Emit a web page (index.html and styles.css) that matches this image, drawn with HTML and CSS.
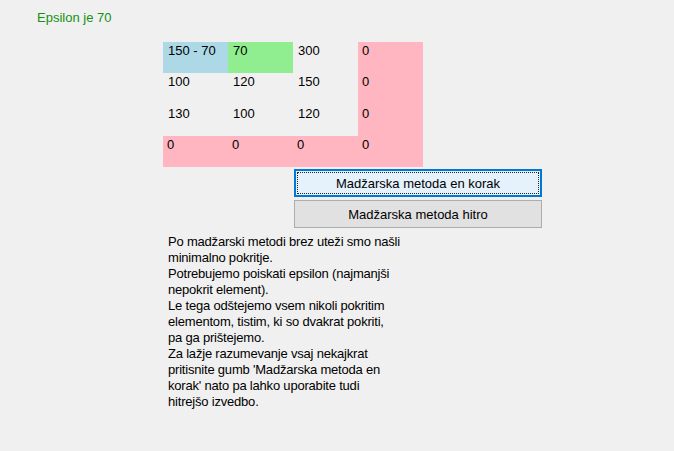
FILE: index.html
```html
<!DOCTYPE html>
<html lang="sl">
<head>
<meta charset="utf-8">
<title>Madžarska metoda</title>
<link rel="stylesheet" href="styles.css">
</head>
<body>
<div class="form">
  <div class="epsilon">Epsilon je 70</div>
  <div class="matrix">
    <div class="cell blue">150 - 70</div>
    <div class="cell green">70</div>
    <div class="cell">300</div>
    <div class="cell pink">0</div>
    <div class="cell">100</div>
    <div class="cell">120</div>
    <div class="cell">150</div>
    <div class="cell pink">0</div>
    <div class="cell">130</div>
    <div class="cell">100</div>
    <div class="cell">120</div>
    <div class="cell pink">0</div>
    <div class="cell pink">0</div>
    <div class="cell pink">0</div>
    <div class="cell pink">0</div>
    <div class="cell pink">0</div>
  </div>
  <div class="buttons">
    <button class="btn focused"><span class="focus">Madžarska metoda en korak</span></button>
    <button class="btn">Madžarska metoda hitro</button>
  </div>
  <p class="info">Po madžarski metodi brez uteži smo našli<br>minimalno pokritje.<br>Potrebujemo poiskati epsilon (najmanjši<br>nepokrit element).<br>Le tega odštejemo vsem nikoli pokritim<br>elementom, tistim, ki so dvakrat pokriti,<br>pa ga prištejemo.<br>Za lažje razumevanje vsaj nekajkrat<br>pritisnite gumb 'Madžarska metoda en<br>korak' nato pa lahko uporabite tudi<br>hitrejšo izvedbo.</p>
</div>
</body>
</html>
```

FILE: styles.css
```css
html, body {
  margin: 0;
  padding: 0;
  background: #f0f0f0;
}

body {
  width: 674px;
  height: 451px;
  overflow: hidden;
  font-family: "Liberation Sans", Arial, sans-serif;
  font-size: 13px;
  color: #000;
}

.form {
  display: flex;
  flex-direction: column;
  padding-top: 10px;
}

.epsilon {
  margin-left: 37px;
  line-height: 15px;
  color: #139213;
}

.matrix {
  margin-left: 163px;
  margin-top: 17px;
  display: grid;
  grid-template-columns: repeat(4, 65px);
  grid-template-rows: repeat(4, 31.25px);
  width: 260px;
}

.cell {
  padding: 1px 0 0 5px;
  line-height: 15px;
  white-space: nowrap;
}

.cell.pink { padding-left: 4px; background: #ffb6c1; }
.blue { background: #add8e6; }
.green { background: #90ee90; }

.buttons {
  margin-left: 294px;
  margin-top: 2px;
  width: 248px;
  display: flex;
  flex-direction: column;
  gap: 3px;
}

.btn {
  height: 28px;
  width: 248px;
  margin: 0;
  padding: 0;
  font-family: "Liberation Sans", Arial, sans-serif;
  font-size: 13px;
  color: #000;
  background: #e1e1e1;
  border: 1px solid #adadad;
  display: flex;
  align-items: center;
  justify-content: center;
}

.btn.focused {
  background: #e5f1fb;
  border: 2px solid #0078d7;
  padding: 1px;
}

.focus {
  flex: 1;
  align-self: stretch;
  display: flex;
  align-items: center;
  justify-content: center;
  border: 1px dotted #222;
}

.info {
  margin: 6px 0 0 168px;
  line-height: 16px;
  letter-spacing: -0.2px;
  white-space: nowrap;
}
```
